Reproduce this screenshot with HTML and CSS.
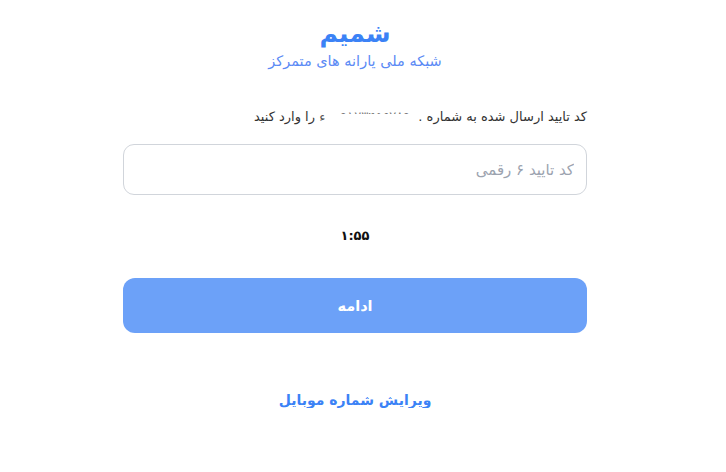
FILE: index.html
```html
<!DOCTYPE html>
<html lang="fa" dir="rtl">
<head>
<meta charset="utf-8">
<link rel="stylesheet" href="styles.css">
</head>
<body>
<main class="page">
  <header class="brand">
    <h1 class="brand-title">شمیم</h1>
    <p class="brand-sub">شبکه ملی یارانه های متمرکز</p>
  </header>
  <p class="hint">کد تایید ارسال شده به شماره <span class="dot">.</span> <span class="masked">۰۹۱۲۳۴۵۶۷۸۹</span> <span class="masked-end">ء</span> را وارد کنید</p>
  <input class="code-input" type="text" placeholder="کد تایید ۶ رقمی">
  <div class="timer">۱:۵۵</div>
  <button class="submit" type="button">ادامه</button>
  <a class="edit-link" href="#">ویرایش شماره موبایل</a>
</main>
</body>
</html>
```
FILE: styles.css
```css
* { box-sizing: border-box; }
html, body { margin: 0; padding: 0; background: #fff; }
body {
  font-family: "DejaVu Sans", "Noto Sans", sans-serif;
  color: #222;
}
.page {
  width: 464px;
  margin-right: 139px;
  margin-left: auto;
  display: flex;
  flex-direction: column;
  align-items: stretch;
}
.brand {
  display: flex;
  flex-direction: column;
  align-items: center;
  padding-top: 18px;
}
.brand-title {
  margin: 0;
  font-size: 25px;
  line-height: 32px;
  font-weight: 700;
  color: #3b82f6;
}
.brand-sub {
  margin: 0;
  font-size: 14.5px;
  line-height: 22px;
  color: #5b8af5;
}
.hint {
  margin: 34px 0 0;
  font-size: 13px;
  line-height: 22px;
  color: #333;
  text-align: right;
}
.masked {
  display: inline-block;
  height: 4px;
  overflow: hidden;
  vertical-align: 7px;
  line-height: 13px;
  color: #777;
  direction: ltr;
  padding: 0 4px;
}
.masked-end { color: #555; }
.code-input {
  margin-top: 16px;
  height: 51px;
  width: 100%;
  border: 1px solid #d1d5db;
  border-radius: 11px;
  padding: 0 12px;
  font-family: inherit;
  font-size: 15px;
  direction: rtl;
  outline: none;
}
.code-input::placeholder { color: #9ca3af; }
.timer {
  margin-top: 32px;
  text-align: center;
  font-size: 13px;
  font-weight: 700;
  line-height: 18px;
  color: #111;
}
.submit {
  margin-top: 33px;
  height: 55px;
  border: 0;
  border-radius: 12px;
  background: #3b82f6;
  opacity: 0.75;
  color: #fff;
  font-family: inherit;
  font-size: 14.5px;
  font-weight: 700;
}
.edit-link {
  margin-top: 59px;
  align-self: center;
  font-size: 14px;
  font-weight: 700;
  color: #3b82f6;
  text-decoration: none;
}
```
